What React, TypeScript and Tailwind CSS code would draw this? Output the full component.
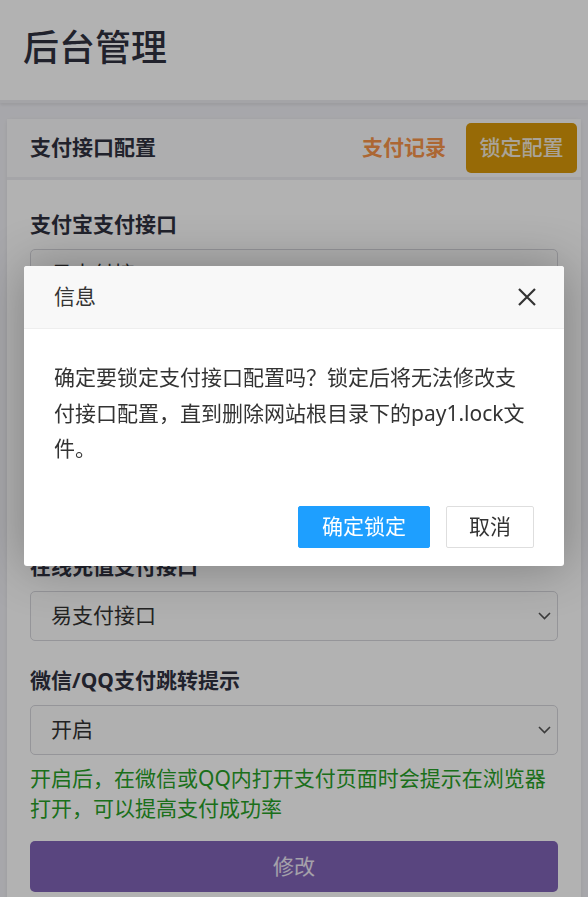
import React from "react";

const font = { fontFamily: '"Noto Sans", "Noto Sans CJK SC", sans-serif' };

function Chevron() {
  return (
    <svg width="13" height="8" viewBox="0 0 13 8" fill="none" className="shrink-0">
      <path d="M1 1l5.5 5.5L12 1" stroke="#555" strokeWidth="1.6" />
    </svg>
  );
}

function Select({ value }: { value: string }) {
  return (
    <div className="h-[50px] rounded-[5px] border border-[#d6d6dc] bg-[#fcfcfc] flex items-center justify-between pl-[20px] pr-[6px]">
      <span className="text-[21px] text-[#333]">{value}</span>
      <Chevron />
    </div>
  );
}

function Field({ label, value }: { label: string; value: string }) {
  return (
    <div className="mb-[24px]">
      <div className="text-[21px] leading-[30px] font-bold text-[#30323f] mb-[10px]">{label}</div>
      <Select value={value} />
    </div>
  );
}

export default function App() {
  return (
    <div style={font} className="relative min-h-[897px] bg-[#f0f0f5] overflow-hidden">
      <header className="h-[103px] bg-white flex items-center pl-[23px] pb-[4px] shadow-[0_2px_3px_rgba(0,0,0,0.08)] border-b-[3px] border-[#ebebf0]">
        <h1 className="text-[36px] font-medium text-[#30323f]">后台管理</h1>
      </header>

      <main className="px-[7px] pt-[16px]">
        <div className="bg-white rounded-[3px] shadow-[0_1px_4px_rgba(0,0,0,0.08)]">
          <div className="h-[61px] bg-[#fafafb] border-b-[3px] border-[#ececf1] flex items-center justify-between pl-[23px] pr-[4px]">
            <span className="text-[21px] font-bold text-[#30323f]">支付接口配置</span>
            <div className="flex items-center gap-[20px]">
              <span className="text-[21px] font-bold text-[#f7944a]">支付记录</span>
              <span className="h-[50px] w-[111px] justify-center rounded-[5px] bg-[#d8990a] text-[21px] font-medium text-[#f3eadb] flex items-center">
                锁定配置
              </span>
            </div>
          </div>

          <div className="px-[23px] pt-[29px] pb-[20px]">
            <Field label="支付宝支付接口" value="易支付接口" />
            <Field label="QQ钱包支付接口" value="易支付接口" />
            <Field label="微信支付接口" value="易支付接口" />
            <Field label="在线充值支付接口" value="易支付接口" />
            <div>
              <div className="text-[21px] leading-[30px] font-bold text-[#30323f] mb-[10px]">微信/QQ支付跳转提示</div>
              <Select value="开启" />
              <p className="mt-[8px] text-[21px] leading-[30px] text-[#27a027]">
                开启后，在微信或QQ内打开支付页面时会提示在浏览器打开，可以提高支付成功率
              </p>
            </div>
            <button className="mt-[18px] w-full h-[51px] rounded-[5px] bg-[#8064b6] text-[21px] text-white/85">
              修改
            </button>
          </div>
        </div>
      </main>

      <div className="fixed inset-0 bg-black/30" />

      <div className="absolute left-[24px] top-[266px] w-[540px] bg-white rounded-[3px] shadow-[1px_1px_50px_rgba(0,0,0,0.3)] overflow-hidden">
        <div className="h-[63px] bg-[#f8f8f8] border-b border-[#eee] flex items-center justify-between pl-[30px] pr-[27px]">
          <span className="text-[21px] text-[#333]">信息</span>
          <svg width="20" height="20" viewBox="0 0 20 20">
            <path d="M2 2L18 18M18 2L2 18" stroke="#333" strokeWidth="2.2" />
          </svg>
        </div>
        <div className="px-[30px] pt-[31px] pb-[31px] text-[21px] leading-[35.5px] text-[#333]">
          确定要锁定支付接口配置吗？锁定后将无法修改支付接口配置，直到删除网站根目录下的pay1.lock文件。
        </div>
        <div className="flex justify-end gap-[16px] pr-[30px] pt-[8px] pb-[18px]">
          <button className="h-[42px] px-[23px] rounded-[2px] bg-[#1e9fff] border border-[#1e9fff] text-white text-[21px]">
            确定锁定
          </button>
          <button className="h-[42px] px-[22px] rounded-[2px] bg-white border border-[#dedede] text-[#333] text-[21px]">
            取消
          </button>
        </div>
      </div>
    </div>
  );
}
